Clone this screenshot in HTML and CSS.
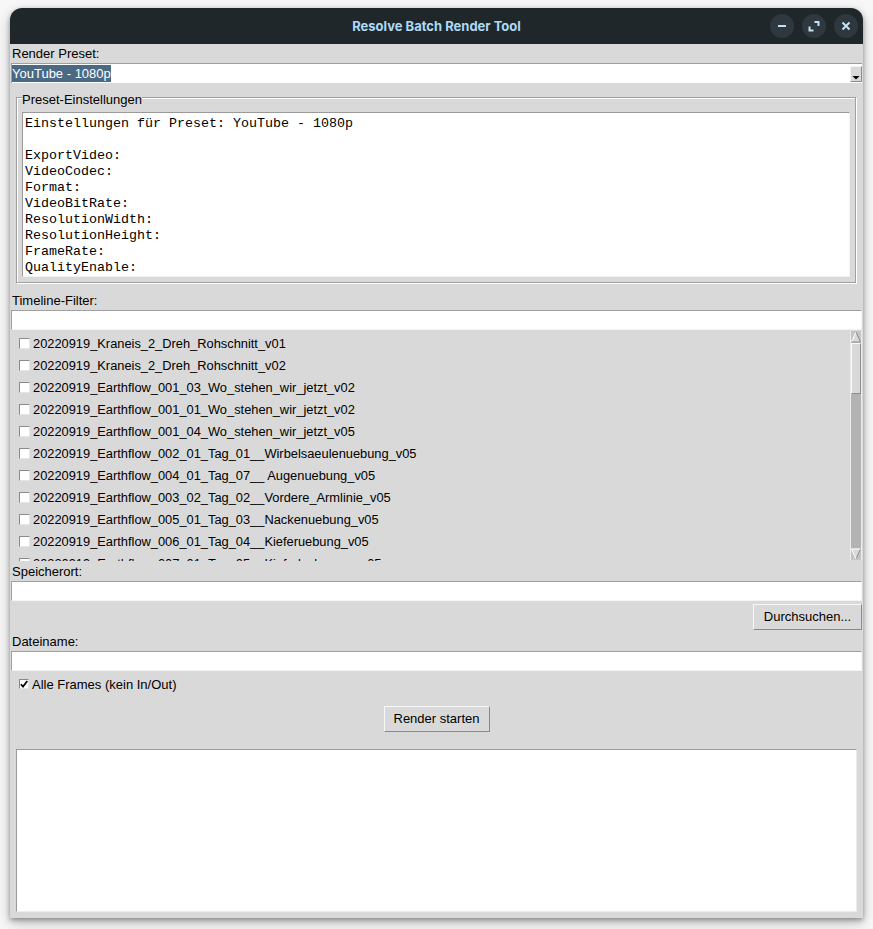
FILE: index.html
```html
<!DOCTYPE html>
<html lang="de">
<head>
<meta charset="utf-8">
<title>Resolve Batch Render Tool</title>
<link rel="stylesheet" href="styles.css">
</head>
<body>
<div class="window">
  <header class="titlebar">
    <span class="title">Resolve Batch Render Tool</span>
    <div class="wm-buttons">
      <span class="wm-btn"><svg width="24" height="24" viewBox="0 0 24 24"><path d="M8 12H16" class="wm-ico"/></svg></span>
      <span class="wm-btn"><svg width="24" height="24" viewBox="0 0 24 24"><path d="M12.5 8H16.5V12M11.5 16.5H7.5V12.5" class="wm-ico"/></svg></span>
      <span class="wm-btn"><svg width="24" height="24" viewBox="0 0 24 24"><path d="M8.5 8.5L15.5 15.5M15.5 8.5L8.5 15.5" class="wm-ico"/></svg></span>
    </div>
  </header>
  <main class="content">
    <div class="label">Render Preset:</div>
    <div class="combo">
      <span class="combo-sel">YouTube - 1080p</span>
      <span class="combo-arrow"><svg width="10" height="14" viewBox="0 0 10 14"><path d="M1.5 9H8.5L5 12.5Z" fill="#000"/></svg></span>
    </div>
    <fieldset class="group">
      <legend class="group-label">Preset-Einstellungen</legend>
      <div class="textbox">Einstellungen für Preset: YouTube - 1080p

ExportVideo:
VideoCodec:
Format:
VideoBitRate:
ResolutionWidth:
ResolutionHeight:
FrameRate:
QualityEnable:
</div>
    </fieldset>

    <div class="label label-filter">Timeline-Filter:</div>
    <div class="entry"></div>

    <div class="list">
      <div class="rows">
        <div class="row"><span class="cb"></span><span>20220919_Kraneis_2_Dreh_Rohschnitt_v01</span></div>
        <div class="row"><span class="cb"></span><span>20220919_Kraneis_2_Dreh_Rohschnitt_v02</span></div>
        <div class="row"><span class="cb"></span><span>20220919_Earthflow_001_03_Wo_stehen_wir_jetzt_v02</span></div>
        <div class="row"><span class="cb"></span><span>20220919_Earthflow_001_01_Wo_stehen_wir_jetzt_v02</span></div>
        <div class="row"><span class="cb"></span><span>20220919_Earthflow_001_04_Wo_stehen_wir_jetzt_v05</span></div>
        <div class="row"><span class="cb"></span><span>20220919_Earthflow_002_01_Tag_01__Wirbelsaeulenuebung_v05</span></div>
        <div class="row"><span class="cb"></span><span>20220919_Earthflow_004_01_Tag_07__ Augenuebung_v05</span></div>
        <div class="row"><span class="cb"></span><span>20220919_Earthflow_003_02_Tag_02__Vordere_Armlinie_v05</span></div>
        <div class="row"><span class="cb"></span><span>20220919_Earthflow_005_01_Tag_03__Nackenuebung_v05</span></div>
        <div class="row"><span class="cb"></span><span>20220919_Earthflow_006_01_Tag_04__Kieferuebung_v05</span></div>
        <div class="row"><span class="cb"></span><span>20220919_Earthflow_007_01_Tag_05__Kieferlockerung_v05</span></div>
      </div>
      <div class="scrollbar">
        <span class="sb-arrow"><svg width="10" height="12" viewBox="0 0 10 12"><path d="M5 1L9.5 11H0.5Z" fill="#d9d9d9"/><path d="M0.5 11L5 1" stroke="#fff" stroke-width="1" fill="none"/><path d="M5 1L9.5 11H0.5" stroke="#8c8c8c" stroke-width="1" fill="none"/></svg></span>
        <span class="sb-slider"></span>
        <span class="sb-trough"></span>
        <span class="sb-arrow"><svg width="10" height="12" viewBox="0 0 10 12"><path d="M0.5 1H9.5L5 11Z" fill="#d9d9d9"/><path d="M5 11L9.5 1" stroke="#8c8c8c" stroke-width="1" fill="none"/><path d="M9.5 1H0.5L5 11" stroke="#fff" stroke-width="1" fill="none"/></svg></span>
      </div>
    </div>

    <div class="label label-dest">Speicherort:</div>
    <div class="entry"></div>
    <div class="btn-row">
      <button class="btn btn-browse" type="button">Durchsuchen...</button>
    </div>

    <div class="label label-file">Dateiname:</div>
    <div class="entry"></div>

    <div class="check-row">
      <span class="cb cb-checked"><svg width="8" height="8" viewBox="0 0 8 8"><path d="M0.8 4.2L3 6.6L7.3 0.9" stroke="#000" stroke-width="1.7" fill="none"/></svg></span>
      <span>Alle Frames (kein In/Out)</span>
    </div>

    <button class="btn btn-render" type="button">Render starten</button>

    <div class="log"></div>
  </main>
</div>
</body>
</html>
```

FILE: styles.css
```css
* {
  box-sizing: border-box;
}

html,
body {
  margin: 0;
}

body {
  width: 873px;
  height: 929px;
  padding: 8px 10px 0 10px;
  overflow: hidden;
  background: #f7f7f7;
  font-family: "Liberation Sans", Arial, sans-serif;
  font-size: 13px;
  color: #000;
}

.window {
  width: 853px;
  height: 910px;
  background: #d9d9d9;
  border-radius: 12px 12px 0 0;
  box-shadow: 0 2px 5px rgba(0, 0, 0, 0.35), 0 5px 14px rgba(0, 0, 0, 0.22);
  display: flex;
  flex-direction: column;
  overflow: hidden;
}

/* ---------- title bar ---------- */
.titlebar {
  height: 36px;
  flex: none;
  background: #1f272b;
  display: grid;
  grid-template-columns: 1fr auto 1fr;
  align-items: center;
}

.title {
  grid-column: 2;
  font-family: Inter, "Noto Sans", sans-serif;
  font-weight: 700;
  font-size: 13px;
  color: #addaf5;
  white-space: nowrap;
}

.wm-buttons {
  grid-column: 3;
  justify-self: end;
  display: flex;
  gap: 8px;
  padding-right: 5px;
}

.wm-btn {
  width: 24px;
  height: 24px;
  border-radius: 50%;
  background: #2e383e;
  display: flex;
}

.wm-ico {
  stroke: #c2e1f7;
  stroke-width: 2;
  fill: none;
}

/* ---------- content ---------- */
.content {
  flex: 1;
  display: flex;
  flex-direction: column;
}

.label {
  height: 19px;
  line-height: 19px;
  padding-left: 2px;
  white-space: nowrap;
}

.label-filter {
  margin-top: 8px;
}

.label-dest {
  margin-top: 1px;
}

.label-file {
  margin-top: 2px;
}

.combo {
  height: 20px;
  margin: 0 1px;
  background: #fff;
  border-top: 1px solid #9e9e9e;
  border-left: 1px solid #9e9e9e;
  display: flex;
  align-items: flex-start;
  padding-top: 1px;
}

.combo-sel {
  height: 17px;
  line-height: 17px;
  background: #4a6984;
  color: #fff;
  white-space: nowrap;
}

.combo-arrow {
  margin-left: auto;
  margin-top: 1px;
  width: 12px;
  height: 16px;
  background: #d9d9d9;
  border: 1px solid;
  border-color: #f4f4f4 #8c8c8c #8c8c8c #f4f4f4;
  display: flex;
  justify-content: center;
}

/* labelframe */
.group {
  margin: 4px 7px 0 6px;
  padding: 4px 5px 5px 5px;
  border: 1px solid #a0a0a0;
  box-shadow: inset 1px 1px 0 #fff, 1px 1px 0 #fff;
  min-width: 0;
}

.group-label {
  padding: 5px 0 0 0;
  line-height: 16px;
  background: #d9d9d9;
  white-space: nowrap;
}

.textbox {
  height: 165px;
  background: #fff;
  border: 1px solid;
  border-color: #9a9a9a #f2f2f2 #f2f2f2 #9a9a9a;
  padding: 3px 2px 0;
  font-family: "Liberation Mono", "DejaVu Sans Mono", monospace;
  font-size: 13.33px;
  line-height: 16px;
  white-space: pre;
  overflow: hidden;
}

/* entries */
.entry {
  height: 20px;
  margin: 0 1px;
  background: #fff;
  border: 1px solid;
  border-color: #a0a0a0 #f4f4f4 #f4f4f4 #a0a0a0;
}

/* timeline list */
.list {
  height: 231px;
  display: flex;
}

.rows {
  flex: 1;
  min-width: 0;
  overflow: hidden;
  padding-top: 2px;
}

.row {
  height: 22px;
  display: flex;
  align-items: center;
  gap: 3px;
  padding-left: 9px;
  white-space: nowrap;
  font-size: 12.85px;
}

.cb {
  flex: none;
  width: 11px;
  height: 11px;
  background: #fff;
  border: 1px solid;
  border-color: #8a8a8a #e6e6e6 #e6e6e6 #8a8a8a;
  display: flex;
}

.scrollbar {
  width: 12px;
  margin: 1px 1px 1px 0;
  background: #b3b3b3;
  border-left: 1px solid #ececec;
  border-right: 1px solid #ececec;
  display: flex;
  flex-direction: column;
}

.sb-arrow {
  height: 12px;
  flex: none;
  display: flex;
  background: #c4c4c4;
}

.sb-slider {
  height: 51px;
  flex: none;
  background: #d9d9d9;
  border: 1px solid;
  border-color: #f8f8f8 #8c8c8c #8c8c8c #f8f8f8;
}

.sb-trough {
  flex: 1;
}

/* buttons */
.btn-row {
  display: flex;
  justify-content: flex-end;
  margin: 3px 1px 0 0;
}

.btn {
  height: 26px;
  padding: 0;
  background: #d9d9d9;
  border: 1px solid;
  border-color: #f8f8f8 #8a8a8a #8a8a8a #f8f8f8;
  font-family: "Liberation Sans", Arial, sans-serif;
  font-size: 13px;
  color: #000;
  line-height: 24px;
}

.btn-browse {
  width: 109px;
}

.btn-render {
  width: 106px;
  align-self: center;
  margin-top: 11px;
}

/* check */
.check-row {
  height: 22px;
  margin-top: 2px;
  display: flex;
  align-items: center;
  gap: 3px;
  padding-left: 9px;
  white-space: nowrap;
}

.cb-checked {
  width: 10px;
  height: 10px;
  align-items: center;
  justify-content: center;
}

/* log */
.log {
  height: 163px;
  margin: 17px 6px 0 6px;
  background: #fff;
  border: 1px solid;
  border-color: #9a9a9a #ececec #ececec #9a9a9a;
}
```
